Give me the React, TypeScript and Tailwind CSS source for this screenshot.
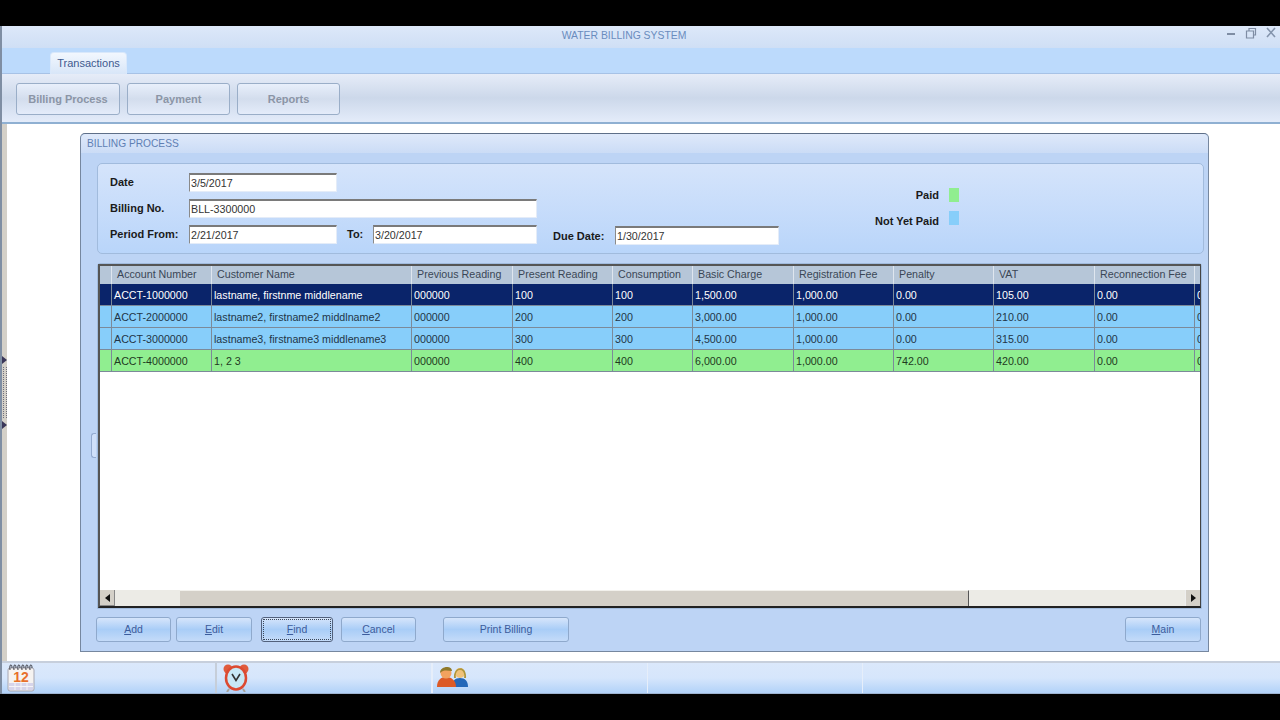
import React from "react";

const columns = [
  { name: "", width: "w-[12px]" },
  { name: "Account Number", width: "w-[100px]" },
  { name: "Customer Name", width: "w-[200px]" },
  { name: "Previous Reading", width: "w-[101px]" },
  { name: "Present Reading", width: "w-[100px]" },
  { name: "Consumption", width: "w-[80px]" },
  { name: "Basic Charge", width: "w-[101px]" },
  { name: "Registration Fee", width: "w-[100px]" },
  { name: "Penalty", width: "w-[100px]" },
  { name: "VAT", width: "w-[101px]" },
  { name: "Reconnection Fee", width: "w-[100px]" },
  { name: "", width: "w-[40px]" },
];

const rows = [
  { cells: ["", "ACCT-1000000", "lastname, firstnme middlename", "000000", "100", "100", "1,500.00", "1,000.00", "0.00", "105.00", "0.00", "0.00"], style: "bg-[#0a246a] text-white" },
  { cells: ["", "ACCT-2000000", "lastname2, firstname2 middlname2", "000000", "200", "200", "3,000.00", "1,000.00", "0.00", "210.00", "0.00", "0.00"], style: "bg-[#87cefa] text-[#1f3547]" },
  { cells: ["", "ACCT-3000000", "lastname3, firstname3 middlename3", "000000", "300", "300", "4,500.00", "1,000.00", "0.00", "315.00", "0.00", "0.00"], style: "bg-[#87cefa] text-[#1f3547]" },
  { cells: ["", "ACCT-4000000", "1, 2 3", "000000", "400", "400", "6,000.00", "1,000.00", "742.00", "420.00", "0.00", "0.00"], style: "bg-[#90ee90] text-[#1f3a1f]" },
];

function Field({ value, width, className = "" }: { value: string; width: string; className?: string }) {
  return (
    <div className={`${width} ${className} h-[19px] bg-white border-t-2 border-l border-t-[#7a7a7a] border-l-[#8a8a8a] border-r border-b border-r-[#e4ecf8] border-b-[#e4ecf8] pl-px text-[10.7px] font-normal leading-[17px] text-[#333]`}>
      {value}
    </div>
  );
}

function ActionButton({ width, children, focused }: { width: string; children: React.ReactNode; focused?: boolean }) {
  return (
    <button
      className={`${width} h-[25px] shrink-0 rounded-[3px] border bg-gradient-to-b from-[#d6e5fb] via-[#a9cdf7] to-[#c4dbf9] text-[10.5px] text-[#3c5c9c] ${
        focused ? "border-[#52617c] outline-1 -outline-offset-3 outline-dotted outline-[#3a4658]" : "border-[#8fa9cc]"
      }`}
    >
      {children}
    </button>
  );
}

function RibbonButton({ label, width }: { label: string; width: string }) {
  return (
    <div className={`${width} h-[32px] rounded-[3px] border border-[#9aaec8] bg-gradient-to-b from-[#e8effb] via-[#d3dded] to-[#e4ecfa] flex items-center justify-center text-[11px] font-bold text-[#8b95a6]`}>
      {label}
    </div>
  );
}

function CalendarIcon() {
  return (
    <svg width="28" height="29" viewBox="0 0 28 29">
      <rect x="1" y="5" width="26" height="23" rx="2" fill="#f6f3f1" stroke="#a6a6b2" />
      <rect x="2" y="20" width="24" height="7" fill="#d6d4ea" />
      <path d="M3 7c-1-6 2-7 2-2M7 7c-1-6 2-7 2-2M11 7c-1-6 2-7 2-2M15 7c-1-6 2-7 2-2M19 7c-1-6 2-7 2-2M23 7c-1-6 2-7 2-2" fill="none" stroke="#3c3c44" strokeWidth="1" />
      <text x="14" y="19" textAnchor="middle" fontSize="14" fontWeight="700" fontFamily="Liberation Sans, sans-serif" fill="#e8702a">12</text>
      <path d="M8 20v7M14 20v7M20 20v7M2 23.500h24" stroke="#f4f4f8" strokeWidth="1" />
    </svg>
  );
}

function ClockIcon() {
  return (
    <svg width="28" height="29" viewBox="0 0 28 29">
      <path d="M7 26l-2 3M21 26l2 3" stroke="#a8a29a" strokeWidth="2" />
      <circle cx="6" cy="6" r="4.500" fill="#e05a3c" />
      <circle cx="22" cy="6" r="4.500" fill="#e05a3c" />
      <ellipse cx="14" cy="15" rx="10" ry="11.500" fill="#c8e8f6" stroke="#dc4a32" strokeWidth="2.500" />
      <path d="M10 11l4 6.500 4-6.500" fill="none" stroke="#333" strokeWidth="1.600" />
    </svg>
  );
}

function UsersIcon() {
  return (
    <svg width="31" height="22" viewBox="0 0 31 22">
      <path d="M15 21c0-6 3-9 8-9s8 3 8 9z" fill="#2467b8" />
      <circle cx="23" cy="7" r="5" fill="#f0c27a" />
      <path d="M17 12c-1-12 13-14 12 0h-2c1-5-1-8-4-8s-5 3-4 8z" fill="#b0963a" />
      <path d="M0 21c0-7 4-10 9-10s10 3 10 10z" fill="#dc5a26" />
      <circle cx="9" cy="7" r="5.500" fill="#f2a25e" />
      <path d="M3 7C3 0 15-1 15 5 11 5 7 3 3 7z" fill="#8f7a2c" />
    </svg>
  );
}

export default function App() {
  return (
    <div className="w-[1280px] h-[720px] bg-black overflow-hidden pt-[26px] pb-[26px] font-['Liberation_Sans',sans-serif]">
      <div className="h-[668px] flex flex-col relative border-l-2 border-[#7f8ea3]">
        {/* title bar */}
        <div className="h-[22px] shrink-0 flex items-center bg-gradient-to-b from-[#dde8f9] to-[#cfdff5] relative">
          <div className="flex-1 text-center text-[10.4px] text-[#6a8cbe] pr-[34px] pb-[3px]">WATER BILLING SYSTEM</div>
          <div className="absolute right-[3px] top-0 flex items-center gap-[8px]">
            <svg width="12" height="14" viewBox="0 0 12 14"><path d="M2 8h8" stroke="#7f8da4" strokeWidth="2" /></svg>
            <svg width="12" height="14" viewBox="0 0 12 14"><path d="M1.500 5h7v7h-7zM4 5V2.500h6.500V9H8.500" fill="none" stroke="#7f8da4" strokeWidth="1.200" /></svg>
            <svg width="12" height="14" viewBox="0 0 12 14"><path d="M2 2l8 9M10 2l-8 9" stroke="#8494ac" strokeWidth="1.600" /></svg>
          </div>
        </div>

        {/* tab strip */}
        <div className="h-[26px] shrink-0 bg-[#bcdafc] border-b border-[#a7c2e6] pl-[48px] pt-[4px]">
          <div className="w-[77px] h-[22px] rounded-t-[4px] border border-b-0 border-[#d9e8fb] bg-gradient-to-b from-[#f2f7fe] to-[#d8e6f8] flex items-center justify-center text-[11px] text-[#3f5a8f]">
            Transactions
          </div>
        </div>

        {/* ribbon */}
        <div className="h-[50px] shrink-0 bg-gradient-to-b from-[#e6ecf8] via-[#ccd8ea] to-[#e4ecfa] border-b-2 border-[#8fb0d2] pl-[14px] pt-[9px] flex gap-[7px] items-start">
          <RibbonButton label="Billing Process" width="w-[104px]" />
          <RibbonButton label="Payment" width="w-[103px]" />
          <RibbonButton label="Reports" width="w-[103px]" />
        </div>

        {/* content */}
        <div className="flex-1 flex min-h-0 bg-white">
          <div className="w-[5px] shrink-0 bg-[#d4d0c8] flex flex-col items-center justify-center gap-[3px]">
            <svg width="5" height="8" viewBox="0 0 5 8"><path d="M0 0l5 4-5 4z" fill="#3a3658" /></svg>
            <div className="w-[4px] h-[51px] border-x border-dotted border-[#6f6f7c]" />
            <svg width="5" height="8" viewBox="0 0 5 8"><path d="M0 0l5 4-5 4z" fill="#3a3658" /></svg>
          </div>

          {/* billing panel */}
          <div className="ml-[73px] mt-[9px] w-[1129px] h-[519px] rounded-t-[5px] border border-[#76879f] border-t-[#5e6f88] bg-[#bdd4f5] flex flex-col relative">
            <div className="h-[19px] shrink-0 rounded-t-[5px] bg-gradient-to-b from-[#dfe9fa] to-[#cbdcf6] pl-[6px] text-[10.2px] leading-[19px] text-[#5f7fb4]">
              BILLING PROCESS
            </div>

            {/* header fields */}
            <div className="ml-[16px] mt-[10px] w-[1107px] h-[91px] shrink-0 rounded-[5px] border border-[#a1bbdd] bg-gradient-to-b from-[#d5e4fb] to-[#b9d5fa] flex text-[11px] font-bold text-[#1a1a1a]">
              <div className="pl-[12px] pt-[9px] flex flex-col">
                <div className="flex items-center h-[19px]">
                  <span className="w-[79px]">Date</span>
                  <Field value="3/5/2017" width="w-[148px]" />
                </div>
                <div className="flex items-center h-[19px] mt-[7px]">
                  <span className="w-[79px]">Billing No.</span>
                  <Field value="BLL-3300000" width="w-[348px]" />
                </div>
                <div className="flex items-center h-[19px] mt-[7px]">
                  <span className="w-[79px]">Period From:</span>
                  <Field value="2/21/2017" width="w-[148px]" />
                  <span className="ml-[10px] w-[26px]">To:</span>
                  <Field value="3/20/2017" width="w-[164px]" />
                  <span className="ml-[16px] w-[62px] mt-[3px]">Due Date:</span>
                  <Field value="1/30/2017" width="w-[164px]" className="mt-[2px]" />
                </div>
              </div>
              <div className="ml-[96px] pt-[24px] flex flex-col items-end gap-[9px]">
                <div className="flex items-center h-[14px] gap-[10px]">
                  <span>Paid</span>
                  <span className="w-[10px] h-[14px] bg-[#90ee90]" />
                </div>
                <div className="flex items-center h-[14px] gap-[10px]">
                  <span className="mt-[6px]">Not Yet Paid</span>
                  <span className="w-[10px] h-[14px] bg-[#87cefa]" />
                </div>
              </div>
            </div>

            {/* grid */}
            <div className="ml-[16px] mt-[9px] w-[1105px] h-[346px] shrink-0 rounded-t-[3px] border border-[#a1bbdd]">
              <div className="h-full border-t-2 border-l-2 border-[#555] border-r border-r-[#444] border-b-2 border-b-[#222] bg-white flex flex-col overflow-hidden">
                <div className="flex-1 min-h-0 overflow-hidden">
                  <div className="flex h-[18px] bg-[#b6c6d8]">
                    {columns.map((col, i) => (
                      <div key={i} className={`${col.width} shrink-0 border-r border-[#dfe6ef] pl-[5px] text-[10.7px] leading-[17px] text-[#3a4656] whitespace-nowrap overflow-hidden`}>
                        {col.name}
                      </div>
                    ))}
                  </div>
                  {rows.map((row) => (
                    <div key={row.cells[1]} className={`flex h-[22px] border-b border-[#7c8a99] ${row.style}`}>
                      {row.cells.map((cell, i) => (
                        <div key={i} className={`${columns[i].width} shrink-0 border-r border-[#7c8a99] pl-[2px] text-[10.7px] leading-[22px] whitespace-nowrap overflow-hidden`}>
                          {cell}
                        </div>
                      ))}
                    </div>
                  ))}
                </div>
                {/* horizontal scrollbar */}
                <div className="h-[16px] shrink-0 flex bg-[#ecebe6]">
                  <div className="w-[15px] bg-[#d4d0c8] border-r border-b border-[#888] flex items-center justify-center">
                    <svg width="5" height="8" viewBox="0 0 5 8"><path d="M5 0L0 4l5 4z" fill="#111" /></svg>
                  </div>
                  <div className="w-[65px]" />
                  <div className="w-[789px] bg-[#d4d0c8] border-t border-[#f2f1ec] border-r border-r-[#555]" />
                  <div className="flex-1" />
                  <div className="w-[15px] bg-[#d4d0c8] border-l border-[#eee] flex items-center justify-center">
                    <svg width="5" height="8" viewBox="0 0 5 8"><path d="M0 0l5 4-5 4z" fill="#111" /></svg>
                  </div>
                </div>
              </div>
            </div>

            {/* actions */}
            <div className="flex pl-[15px] pt-[8px] w-[1120px]">
              <ActionButton width="w-[75px]"><span className="underline">A</span>dd</ActionButton>
              <ActionButton width="w-[76px] ml-[5px]"><span className="underline">E</span>dit</ActionButton>
              <ActionButton width="w-[72px] ml-[9px]" focused><span className="underline">F</span>ind</ActionButton>
              <ActionButton width="w-[75px] ml-[8px]"><span className="underline">C</span>ancel</ActionButton>
              <ActionButton width="w-[126px] ml-[27px]">Print Billing</ActionButton>
              <ActionButton width="w-[76px] ml-auto"><span className="underline">M</span>ain</ActionButton>
            </div>

            {/* small splitter grip on the left edge */}
            <div className="absolute left-[10px] top-[299px] w-[5px] h-[25px] rounded-l-[3px] border border-r-0 border-[#93abd0] bg-[#cfe0fa]" />
          </div>
        </div>

        {/* status bar */}
        <div className="h-[33px] shrink-0 flex border-t-2 border-[#c7cfdc] border-b border-b-[#9eb4d2] bg-gradient-to-b from-[#dbe8fb] via-[#d6e6fc] to-[#b2d2f8]">
          <div className="w-[215px] pl-[5px] border-r-2 border-[#c6ced9]"><CalendarIcon /></div>
          <div className="w-[216px] pl-[5px] border-r-2 border-[#e6eefa]"><ClockIcon /></div>
          <div className="w-[215px] pl-[4px] pt-[3px] border-r border-[#e6eefa]"><UsersIcon /></div>
          <div className="w-[215px] border-r border-[#e6eefa]" />
          <div className="flex-1" />
        </div>
      </div>
    </div>
  );
}
